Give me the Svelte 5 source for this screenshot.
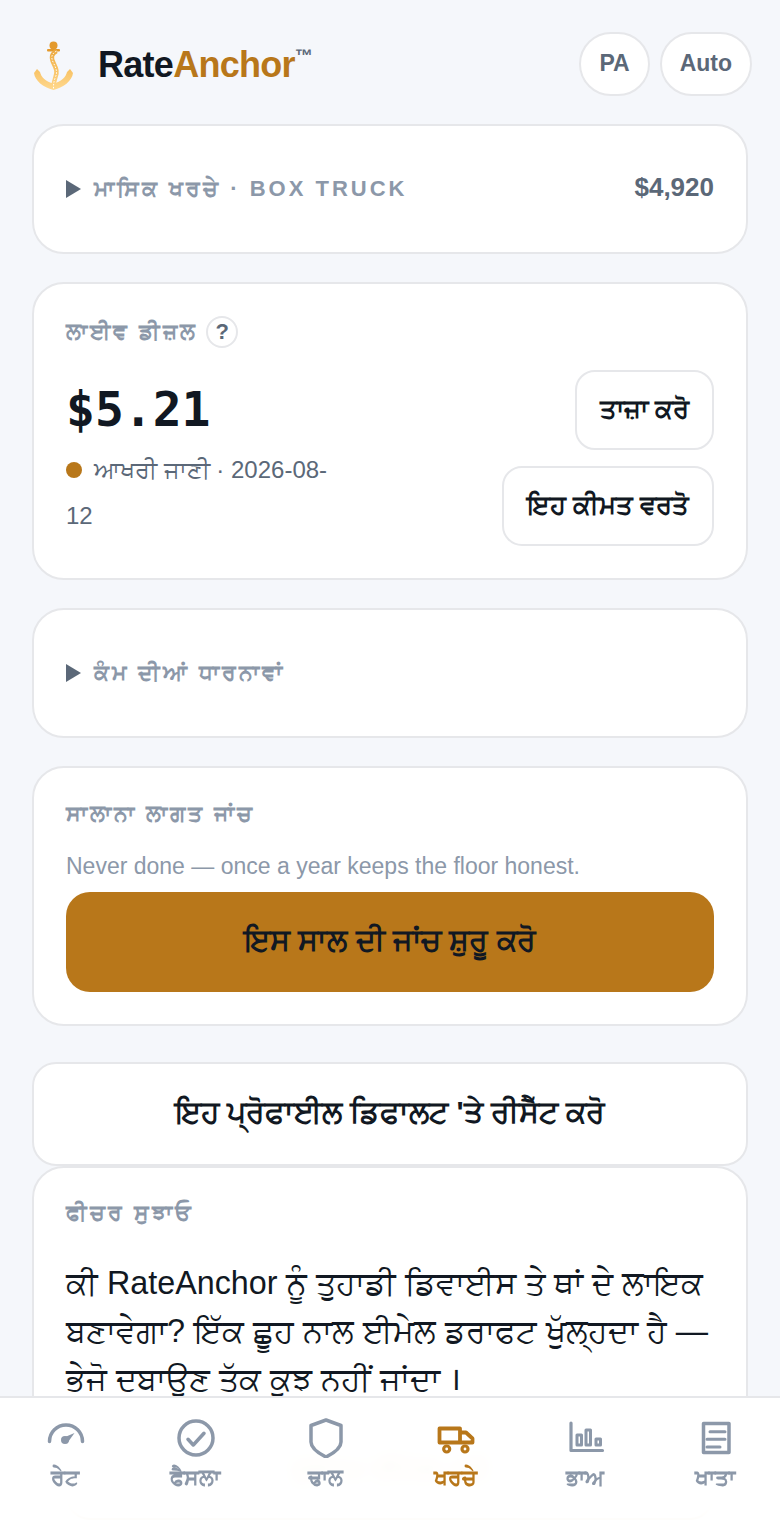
<script>
  const tabs = [
    { label: 'ਰੇਟ', icon: 'gauge' },
    { label: 'ਫੈਸਲਾ', icon: 'check' },
    { label: 'ਢਾਲ', icon: 'shield' },
    { label: 'ਖਰਚੇ', icon: 'truck', active: true },
    { label: 'ਭਾਅ', icon: 'bars' },
    { label: 'ਖਾਤਾ', icon: 'doc' }
  ];
</script>

<main class="page">
  <header class="top">
    <div class="brand">
      <svg class="logo" viewBox="0 0 44 50" width="44" height="50">
        <defs>
          <linearGradient id="anchorFill" gradientUnits="userSpaceOnUse" x1="0" y1="0" x2="0" y2="50">
            <stop offset="0" stop-color="#e49a2c" />
            <stop offset="0.5" stop-color="#f6bd5c" />
            <stop offset="1" stop-color="#ffd98f" />
          </linearGradient>
        </defs>
        <circle cx="21.500" cy="5.500" r="4" fill="#e49a2c" />
        <rect x="15" y="9" width="13" height="2.400" rx="1" fill="#e49a2c" />
        <path d="M2 33l3-4 3 3c1 5 6 10 13.500 11.500C29 42 34 37 35 32l3-3 3 4c-1 8-9 14-19.500 17C11 47 3 41 2 33z" fill="url(#anchorFill)" />
        <path d="M24.500 11c-5 3-6 6-3 12s4 9 2 14-2 8-2 12" fill="none" stroke="url(#anchorFill)" stroke-width="4.500" />
        <path d="M24.500 11c-5 3-6 6-3 12s4 9 2 14-2 8-2 12" fill="none" stroke="#fff" stroke-width="1" stroke-dasharray="1.500 1.500" />
      </svg>
      <div class="word">Rate<span>Anchor</span><sup>™</sup></div>
    </div>
    <div class="pills">
      <button class="pill">PA</button>
      <button class="pill">Auto</button>
    </div>
  </header>

  <section class="card fold spread">
    <div class="fold-label"><i class="tri"></i><span class="eyebrow">ਮਾਸਿਕ ਖਰਚੇ · BOX TRUCK</span></div>
    <strong class="total">$4,920</strong>
  </section>

  <section class="card diesel">
    <div class="eyebrow-row"><span class="eyebrow">ਲਾਈਵ ਡੀਜ਼ਲ</span><span class="help">?</span></div>
    <div class="diesel-body">
      <div class="price-col">
        <div class="price">$5.21</div>
        <p class="fresh"><i class="dot"></i>ਆਖਰੀ ਜਾਣੀ · 2026-08-12</p>
      </div>
      <div class="actions">
        <button class="ghost">ਤਾਜ਼ਾ ਕਰੋ</button>
        <button class="ghost">ਇਹ ਕੀਮਤ ਵਰਤੋ</button>
      </div>
    </div>
  </section>

  <section class="card fold">
    <div class="fold-label"><i class="tri"></i><span class="eyebrow">ਕੰਮ ਦੀਆਂ ਧਾਰਨਾਵਾਂ</span></div>
  </section>

  <section class="card audit">
    <div class="eyebrow">ਸਾਲਾਨਾ ਲਾਗਤ ਜਾਂਚ</div>
    <p class="note">Never done — once a year keeps the floor honest.</p>
    <button class="primary">ਇਸ ਸਾਲ ਦੀ ਜਾਂਚ ਸ਼ੁਰੂ ਕਰੋ</button>
  </section>

  <button class="reset">ਇਹ ਪ੍ਰੋਫਾਈਲ ਡਿਫਾਲਟ 'ਤੇ ਰੀਸੈੱਟ ਕਰੋ</button>

  <section class="card suggest">
    <div class="eyebrow">ਫੀਚਰ ਸੁਝਾਓ</div>
    <p class="pitch">ਕੀ RateAnchor ਨੂੰ ਤੁਹਾਡੀ ਡਿਵਾਈਸ ਤੇ ਥਾਂ ਦੇ ਲਾਇਕ ਬਣਾਵੇਗਾ? ਇੱਕ ਛੂਹ ਨਾਲ ਈਮੇਲ ਡਰਾਫਟ ਖੁੱਲ੍ਹਦਾ ਹੈ — ਭੇਜੋ ਦਬਾਉਣ ਤੱਕ ਕੁਝ ਨਹੀਂ ਜਾਂਦਾ ।</p>
    <button class="send">ਸੁਝਾਅ ਈਮੇਲ ਕਰੋ</button>
  </section>
</main>

<nav class="tabs">
  {#each tabs as tab}
    <button class="tab" class:active={tab.active}>
      <svg viewBox="0 0 40 40" width="40" height="40" fill="none" stroke="currentColor" stroke-width="3.500" stroke-linejoin="round">
        {#if tab.icon === 'gauge'}
          <path d="M4.500 23.500a16.500 16.500 0 0 1 33 0" stroke-linecap="round" />
          <path d="M16.500 20.500l13-5.500-7.500 10.500z" fill="currentColor" stroke="none" />
          <circle cx="20" cy="22" r="4" fill="currentColor" stroke="none" />
        {:else if tab.icon === 'check'}
          <circle cx="21" cy="20" r="17" />
          <path d="M13 21.300l5.300 5.700L29 15.300" stroke-linecap="round" />
        {:else if tab.icon === 'shield'}
          <path d="M21 2l15 5.500V24c0 6-7 11-15 15C13 35 6 30 6 24V7.500z" />
        {:else if tab.icon === 'truck'}
          <path d="M25 24.500H4.500V10.500H25zM25 14.500h6l6.500 6v4H25" stroke-width="3.800" />
          <circle cx="11.700" cy="31" r="3" stroke-width="3.200" />
          <circle cx="30" cy="31" r="3" stroke-width="3.200" />
        {:else if tab.icon === 'bars'}
          <path d="M6 5v27.500h31.500" stroke-linecap="round" stroke-width="3.200" />
          <rect x="12" y="17" width="4.500" height="10" stroke-width="3" />
          <rect x="21" y="12" width="4.500" height="15" stroke-width="3" />
          <rect x="31" y="21" width="4.500" height="6" stroke-width="3" />
        {:else}
          <rect x="8.500" y="5.500" width="25.500" height="29" />
          <path d="M15 13.700h15M12 21.300h18M12 29h13" stroke-width="3" stroke-linecap="round" />
        {/if}
      </svg>
      <span>{tab.label}</span>
    </button>
  {/each}
</nav>

<style>
  :global(body) {
    background: #f5f7fb;
    font-family: "Liberation Sans", "Noto Sans", sans-serif;
    color: #111822;
  }

  .page {
    box-sizing: border-box;
    height: 1520px;
    overflow: hidden;
    padding: 32px 32px 0;
    display: flex;
    flex-direction: column;
  }

  .top {
    display: flex;
    justify-content: space-between;
    align-items: center;
    height: 64px;
    margin-right: -4px;
    margin-bottom: 28px;
  }

  .brand {
    display: flex;
    align-items: center;
    gap: 22px;
  }

  .logo {
    margin-top: 2px;
  }

  .word {
    font-size: 36px;
    font-weight: 700;
    letter-spacing: -0.720px;
    padding-top: 1px;
  }

  .word span {
    color: #b8771a;
  }

  .word sup {
    font-size: 18px;
    color: #5b6878;
    letter-spacing: 0;
    font-weight: 700;
    vertical-align: 15px;
    line-height: 0;
  }

  .pills {
    display: flex;
    gap: 10px;
  }

  .pill {
    height: 64px;
    min-width: 70px;
    padding: 0 18px 2px;
    border: 2px solid #e6e7ea;
    border-radius: 32px;
    background: #fff;
    color: #5b6878;
    font: 700 23px "Liberation Sans", sans-serif;
  }

  .card {
    box-sizing: border-box;
    background: #fff;
    border: 2px solid #e6e7ea;
    border-radius: 32px;
    padding: 32px;
    margin-bottom: 28px;
    flex: none;
  }

  .fold {
    height: 130px;
    display: flex;
    align-items: center;
  }

  .spread {
    justify-content: space-between;
  }

  .fold-label {
    display: flex;
    align-items: center;
    gap: 13px;
  }

  .tri {
    width: 0;
    height: 0;
    border-left: 15px solid #5b6878;
    border-top: 9px solid transparent;
    border-bottom: 9px solid transparent;
  }

  .eyebrow {
    color: #8c98a9;
    font-size: 22px;
    font-weight: 700;
    letter-spacing: 3px;
    line-height: 32px;
  }

  .total {
    color: #5b6878;
    font-size: 26px;
    margin-bottom: 4px;
  }

  .diesel {
    height: 298px;
  }

  .eyebrow-row {
    display: flex;
    align-items: center;
    gap: 8px;
    height: 32px;
  }

  .help {
    box-sizing: border-box;
    width: 32px;
    height: 32px;
    border: 2px solid #e6e7ea;
    border-radius: 50%;
    display: grid;
    place-items: center;
    color: #5b6878;
    font-size: 22px;
    font-weight: 700;
  }

  .diesel-body {
    display: flex;
    justify-content: space-between;
    margin-top: 22px;
  }

  .price-col {
    width: 280px;
  }

  .price {
    font: 700 48px "DejaVu Sans Mono", monospace;
    margin-top: 8px;
    line-height: 62px;
  }

  .fresh {
    margin: 7px 0 0;
    color: #5b6878;
    font-size: 24px;
    line-height: 46px;
  }

  .dot {
    display: inline-block;
    width: 16px;
    height: 16px;
    border-radius: 50%;
    background: #b8771a;
    margin-right: 12px;
  }

  .actions {
    display: flex;
    flex-direction: column;
    align-items: flex-end;
    gap: 16px;
  }

  .ghost {
    height: 80px;
    padding: 0 23px;
    background: #fff;
    border: 2px solid #e6e7ea;
    border-radius: 20px;
    color: #111822;
    font: 700 25.600px "Liberation Sans", sans-serif;
  }

  .audit {
    height: 260px;
    margin-bottom: 36px;
  }

  .audit .eyebrow {
    margin-top: -2px;
  }

  .note {
    margin: 17px 0 7px;
    color: #8c98a9;
    font-size: 23px;
    line-height: 38px;
  }

  .primary {
    display: block;
    width: 100%;
    height: 100px;
    padding-bottom: 4px;
    border: none;
    border-radius: 24px;
    background: #b8771a;
    color: #111822;
    font: 700 30px "Liberation Sans", sans-serif;
  }

  .reset {
    flex: none;
    height: 104px;
    padding-bottom: 4px;
    background: #fff;
    border: 2px solid #e6e7ea;
    border-radius: 24px;
    color: #111822;
    font: 700 30px "Liberation Sans", sans-serif;
  }

  .suggest {
    margin: 0;
  }

  .suggest .eyebrow {
    margin-top: -3px;
  }

  .pitch {
    margin: 30px 0 0;
    font-size: 32.300px;
    line-height: 48px;
  }

  .send {
    display: block;
    width: 100%;
    height: 100px;
    margin-top: 17px;
    background: #fff;
    border: 2px solid #b8771a;
    border-radius: 24px;
    color: #b8771a;
    font: 700 30px "Liberation Sans", sans-serif;
  }

  .tabs {
    position: fixed;
    left: 0;
    right: 0;
    bottom: 0;
    box-sizing: border-box;
    height: 124px;
    border-top: 2px solid #e6e7ea;
    background: rgba(255, 255, 255, 0.97);
    backdrop-filter: blur(8px);
    display: grid;
    grid-template-columns: repeat(6, 1fr);
  }

  .tab {
    border: none;
    background: none;
    padding: 20px 0 0;
    display: flex;
    flex-direction: column;
    align-items: center;
    gap: 7px;
    color: #8c98a9;
    font: 700 22px "Liberation Sans", sans-serif;
  }

  .tab.active {
    color: #b8771a;
  }
</style>
